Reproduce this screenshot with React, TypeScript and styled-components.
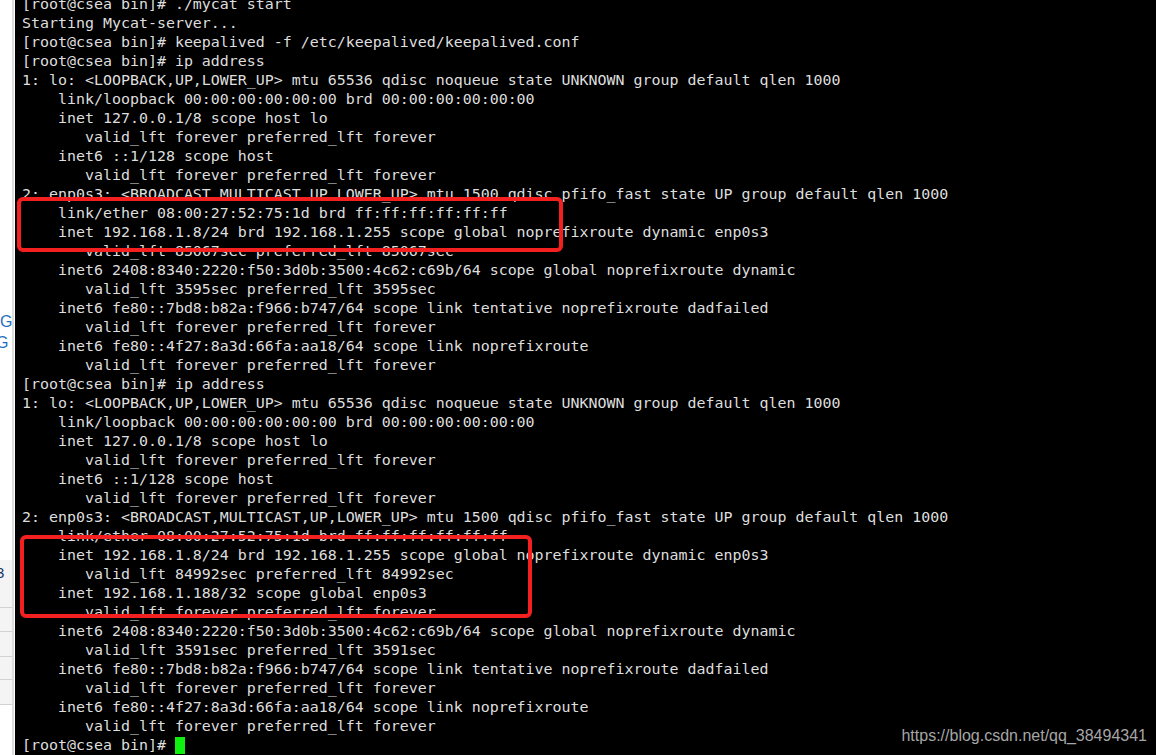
import React from "react";
import styled, { createGlobalStyle } from "styled-components";

const Global = createGlobalStyle`
  html, body { margin: 0; padding: 0; background: #ffffff; overflow: hidden; }
  #root { width: 1156px; height: 755px; }
`;

const Page = styled.div`
  display: flex;
  width: 1156px;
  height: 755px;
  overflow: hidden;
  background: #ffffff;
`;

const Sidebar = styled.div`
  width: 12px;
  flex: 0 0 12px;
  border-right: 2px solid #dcdcdc;
  margin-right: 1px;
  display: flex;
  flex-direction: column;
  overflow: hidden;
  background: #ffffff;
`;

const SideSpacer = styled.div<{ $h: number }>`
  flex: 0 0 ${(p) => p.$h}px;
`;

const SideGlyph = styled.div<{ $shift: number }>`
  height: 21px;
  line-height: 21px;
  font-family: "Liberation Sans", Arial, sans-serif;
  font-size: 16px;
  color: #1f6fc0;
  white-space: nowrap;
  margin-left: ${(p) => p.$shift}px;
`;

const SideTable = styled.div`
  display: flex;
  flex-direction: column;
  background: #f4f4f4;
`;

const SideRow = styled.div<{ $h: number }>`
  height: ${(p) => p.$h}px;
  border-bottom: 1px solid #d2d2d2;
  font-family: "Liberation Sans", Arial, sans-serif;
  font-size: 15px;
  line-height: 26px;
  color: #1a3a66;
  white-space: nowrap;
  margin-left: -4px;
`;

const Terminal = styled.div`
  position: relative;
  flex: 1;
  background: #000000;
  overflow: hidden;
  padding-left: 7px;
`;

const Screen = styled.pre`
  margin: -5px 0 0 0;
  font-family: "DejaVu Sans Mono", "Liberation Mono", monospace;
  font-size: 14.94px;
  line-height: 19px;
  color: #dedede;
  white-space: pre;
`;

const Cursor = styled.span`
  display: inline-block;
  width: 10px;
  height: 17px;
  background: #10f010;
  vertical-align: -4px;
`;

const Highlight = styled.div<{ $l: number; $t: number; $w: number; $h: number }>`
  position: absolute;
  left: ${(p) => p.$l}px;
  top: ${(p) => p.$t}px;
  width: ${(p) => p.$w}px;
  height: ${(p) => p.$h}px;
  box-sizing: border-box;
  border: 4px solid #f42020;
  border-radius: 6px;
  pointer-events: none;
`;

const Watermark = styled.div`
  position: absolute;
  right: 9px;
  top: 727px;
  font-family: "Liberation Sans", Arial, sans-serif;
  font-size: 16px;
  color: #a6a6a6;
  white-space: nowrap;
`;

const loBlock = [
  "1: lo: <LOOPBACK,UP,LOWER_UP> mtu 65536 qdisc noqueue state UNKNOWN group default qlen 1000",
  "    link/loopback 00:00:00:00:00:00 brd 00:00:00:00:00:00",
  "    inet 127.0.0.1/8 scope host lo",
  "       valid_lft forever preferred_lft forever",
  "    inet6 ::1/128 scope host",
  "       valid_lft forever preferred_lft forever",
];

const enpHead = [
  "2: enp0s3: <BROADCAST,MULTICAST,UP,LOWER_UP> mtu 1500 qdisc pfifo_fast state UP group default qlen 1000",
  "    link/ether 08:00:27:52:75:1d brd ff:ff:ff:ff:ff:ff",
  "    inet 192.168.1.8/24 brd 192.168.1.255 scope global noprefixroute dynamic enp0s3",
];

const lines = [
  "[root@csea bin]# ./mycat start",
  "Starting Mycat-server...",
  "[root@csea bin]# keepalived -f /etc/keepalived/keepalived.conf",
  "[root@csea bin]# ip address",
  ...loBlock,
  ...enpHead,
  "       valid_lft 85067sec preferred_lft 85067sec",
  "    inet6 2408:8340:2220:f50:3d0b:3500:4c62:c69b/64 scope global noprefixroute dynamic",
  "       valid_lft 3595sec preferred_lft 3595sec",
  "    inet6 fe80::7bd8:b82a:f966:b747/64 scope link tentative noprefixroute dadfailed",
  "       valid_lft forever preferred_lft forever",
  "    inet6 fe80::4f27:8a3d:66fa:aa18/64 scope link noprefixroute",
  "       valid_lft forever preferred_lft forever",
  "[root@csea bin]# ip address",
  ...loBlock,
  ...enpHead,
  "       valid_lft 84992sec preferred_lft 84992sec",
  "    inet 192.168.1.188/32 scope global enp0s3",
  "       valid_lft forever preferred_lft forever",
  "    inet6 2408:8340:2220:f50:3d0b:3500:4c62:c69b/64 scope global noprefixroute dynamic",
  "       valid_lft 3591sec preferred_lft 3591sec",
  "    inet6 fe80::7bd8:b82a:f966:b747/64 scope link tentative noprefixroute dadfailed",
  "       valid_lft forever preferred_lft forever",
  "    inet6 fe80::4f27:8a3d:66fa:aa18/64 scope link noprefixroute",
  "       valid_lft forever preferred_lft forever",
];

export default function App() {
  return (
    <>
      <Global />
      <Page>
        <Sidebar>
          <SideSpacer $h={311} />
          <SideGlyph $shift={0}>G</SideGlyph>
          <SideGlyph $shift={-4}>G</SideGlyph>
          <SideSpacer $h={207} />
          <SideTable>
            <SideRow $h={47}>3</SideRow>
            <SideRow $h={23} />
            <SideRow $h={24} />
            <SideRow $h={22} />
            <SideRow $h={24} />
          </SideTable>
        </Sidebar>
        <Terminal>
          <Screen>
            {lines.join("\n")}
            {"\n[root@csea bin]# "}
            <Cursor />
          </Screen>
          <Highlight $l={2} $t={197} $w={546} $h={55} />
          <Highlight $l={5} $t={535} $w={512} $h={83} />
          <Watermark>https://blog.csdn.net/qq_38494341</Watermark>
        </Terminal>
      </Page>
    </>
  );
}
